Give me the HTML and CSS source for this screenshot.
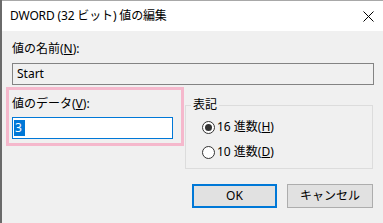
FILE: index.html
```html
<!DOCTYPE html>
<html lang="ja">
<head>
<meta charset="utf-8">
<link rel="stylesheet" href="styles.css">
</head>
<body>
<div class="window">
  <div class="titlebar">
    <span class="title">DWORD (32 ビット) 値の編集</span>
    <svg class="close" width="11" height="11" viewBox="0 0 11 11"><path d="M0.5 0.5 L10.5 10.5 M10.5 0.5 L0.5 10.5" stroke="#000" stroke-width="1" fill="none"/></svg>
  </div>
  <div class="content">
    <div class="label">値の名前(<u>N</u>):</div>
    <div class="textbox readonly">Start</div>
    <div class="row">
      <div class="data-panel">
        <div class="label">値のデータ(<u>V</u>):</div>
        <div class="textbox edit"><span class="sel">3</span></div>
      </div>
      <fieldset class="group">
        <legend>表記</legend>
        <div class="radio first"><span class="dot checked"></span>16 進数(<u>H</u>)</div>
        <div class="radio second"><span class="dot"></span>10 進数(<u>D</u>)</div>
      </fieldset>
    </div>
    <div class="buttons">
      <button class="btn default">OK</button>
      <button class="btn">キャンセル</button>
    </div>
  </div>
</div>
</body>
</html>
```
FILE: styles.css
```css
html, body {
  margin: 0;
  width: 383px;
  height: 223px;
  overflow: hidden;
  background: #f0f0f0;
  font-family: "Noto Sans", "Noto Sans CJK JP", sans-serif;
  font-size: 12px;
  line-height: 16px;
  color: #000;
}
.window {
  height: 223px;
  box-sizing: border-box;
  border-left: 2px solid #6a6a6a;
  display: flex;
  flex-direction: column;
}
.titlebar {
  height: 31px;
  box-sizing: border-box;
  background: #fff;
  border-top: 1px solid #a8a8a8;
  display: flex;
  align-items: center;
  justify-content: space-between;
  padding: 0 8px 0 8px;
}
.title { white-space: nowrap; letter-spacing: -0.15px; }
.close { display: block; margin-right: 1px; }
.content {
  padding: 10px 9px 0 10px;
}
.label { height: 16px; white-space: nowrap; }
.textbox {
  height: 22px;
  box-sizing: border-box;
  line-height: 20px;
}
.readonly {
  margin-top: 6px;
  border: 1px solid #838383;
  padding-left: 4px;
}
.row {
  display: flex;
  margin-top: 2px;
  margin-left: -6px;
  align-items: flex-start;
}
.data-panel {
  width: 178px;
  box-sizing: border-box;
  border: 3px solid #f5b8cc;
  padding: 6px 8px 4px 3px;
}
.edit {
  margin-top: 5px;
  width: 161px;
  background: #fff;
  border: 1px solid #0078d7;
  padding: 2px 0 0 1px;
  line-height: 16px;
}
.sel {
  display: inline-block;
  background: #0078d7;
  color: #fff;
  padding: 0 3px 0 1px;
  line-height: 16px;
}
.group {
  margin: 10px 0 0 1px;
  width: 188px;
  height: 72px;
  box-sizing: border-box;
  border: 1px solid #dcdcdc;
  padding: 0;
  min-width: 0;
}
.group legend {
  padding: 0 2px;
  margin-left: 5px;
  line-height: 16px;
}
.radio {
  display: flex;
  align-items: center;
  height: 16px;
  white-space: nowrap;
  margin-left: 16px;
}
.radio.first { margin-top: 6px; }
.radio.second { margin-top: 9px; }
.dot {
  width: 13px;
  height: 13px;
  box-sizing: border-box;
  border: 1px solid #333;
  border-radius: 50%;
  background: #fff;
  margin-right: 2px;
  display: flex;
  align-items: center;
  justify-content: center;
}
.dot.checked::after {
  content: "";
  width: 7px;
  height: 7px;
  border-radius: 50%;
  background: #333;
}
.buttons {
  display: flex;
  justify-content: flex-end;
  gap: 10px;
  margin-top: 15px;
  margin-right: 1px;
}
.btn {
  height: 24px;
  width: 86px;
  box-sizing: border-box;
  background: #e1e1e1;
  border: 1px solid #adadad;
  font: inherit;
  color: #000;
  padding: 0;
}
.btn.default {
  width: 85px;
  border: 2px solid #0078d7;
}
```
